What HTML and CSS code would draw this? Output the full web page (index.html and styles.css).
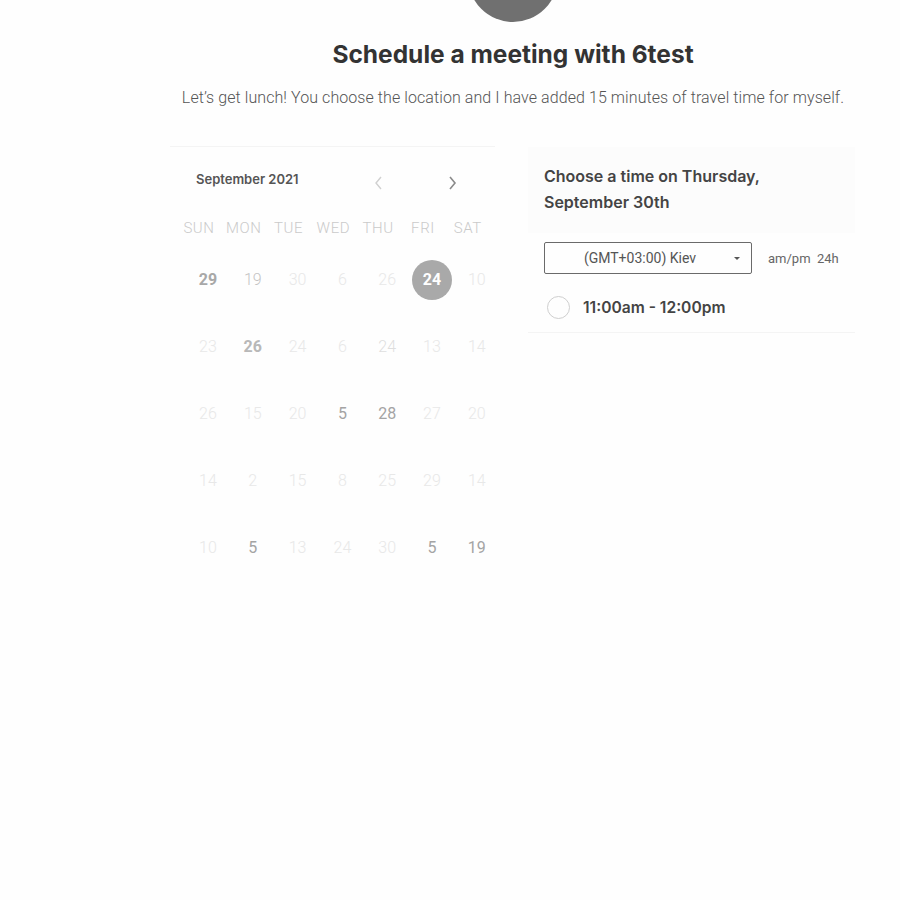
FILE: index.html
```html
<!DOCTYPE html>
<html>
<head>
<meta charset="utf-8">
<link rel="stylesheet" href="styles.css">
</head>
<body>
<div class="page">
  <div class="avatar"></div>
  <h1 class="title">Schedule a meeting with 6test</h1>
  <p class="subtitle">Let’s get lunch! You choose the location and I have added 15 minutes of travel time for myself.</p>
  <div class="columns">
    <section class="calendar">
      <div class="cal-head">
        <span class="month">September 2021</span>
        <span class="nav">
          <svg class="arrow prev" width="10" height="14" viewBox="0 0 10 14"><path d="M7 1 L2 7 L7 13" fill="none" stroke="currentColor" stroke-width="1.4"/></svg>
          <svg class="arrow next" width="10" height="14" viewBox="0 0 10 14"><path d="M3 1 L8 7 L3 13" fill="none" stroke="currentColor" stroke-width="1.6"/></svg>
        </span>
      </div>
      <div class="weekdays">
        <span>SUN</span><span>MON</span><span>TUE</span><span>WED</span><span>THU</span><span>FRI</span><span>SAT</span>
      </div>
      <div class="days">
        <span class="d bold">29</span><span class="d mid">19</span><span class="d faint">30</span><span class="d faint">6</span><span class="d faint">26</span><span class="d sel"><b>24</b></span><span class="d faint">10</span>
        <span class="d faint">23</span><span class="d bold light">26</span><span class="d faint">24</span><span class="d faint">6</span><span class="d faint2">24</span><span class="d faint">13</span><span class="d faint">14</span>
        <span class="d faint">26</span><span class="d faint">15</span><span class="d faint">20</span><span class="d avail">5</span><span class="d avail">28</span><span class="d faint">27</span><span class="d faint">20</span>
        <span class="d faint">14</span><span class="d faint">2</span><span class="d faint">15</span><span class="d faint">8</span><span class="d faint">25</span><span class="d faint">29</span><span class="d faint">14</span>
        <span class="d faint">10</span><span class="d avail">5</span><span class="d faint">13</span><span class="d faint">24</span><span class="d faint">30</span><span class="d avail">5</span><span class="d avail">19</span>
      </div>
    </section>
    <section class="times">
      <div class="times-head">Choose a time on Thursday, September 30th</div>
      <div class="controls">
        <div class="select">
          <span class="select-text">(GMT+03:00) Kiev</span>
          <span class="caret"></span>
        </div>
        <span class="format">am/pm&nbsp;&nbsp;24h</span>
      </div>
      <div class="slot">
        <span class="radio"></span>
        <span class="slot-text">11:00am - 12:00pm</span>
      </div>
    </section>
  </div>
</div>
</body>
</html>
```
FILE: styles.css
```css
html, body {
  margin: 0;
  padding: 0;
  background: #fefefe;
}
body {
  font-family: Roboto, "Liberation Sans", sans-serif;
  width: 900px;
  height: 900px;
  overflow: hidden;
}
.page {
  margin-left: 170px;
  width: 686px;
  display: flex;
  flex-direction: column;
  align-items: center;
}
.avatar {
  width: 90px;
  height: 90px;
  border-radius: 50%;
  background: #707070;
  margin-top: -68px;
}
.title {
  margin: 17px 0 0;
  font-family: Inter, sans-serif;
  font-weight: 700;
  font-size: 24.5px;
  line-height: 30px;
  color: #333;
  letter-spacing: 0;
}
.subtitle {
  margin: 19px 0 0;
  font-family: Roboto, sans-serif;
  font-weight: 300;
  font-size: 16px;
  line-height: 20px;
  color: #555;
  letter-spacing: 0.08px;
  white-space: nowrap;
}
.columns {
  margin-top: 38px;
  width: 686px;
  display: flex;
  gap: 33px;
  align-items: flex-start;
}
.calendar {
  width: 325px;
  border-top: 1px solid #f4f4f4;
}
.cal-head {
  display: flex;
  align-items: center;
  height: 32px;
  margin-top: 16px;
  padding-left: 26px;
}
.month {
  font-family: Inter, sans-serif;
  font-weight: 600;
  font-size: 13px;
  color: #555;
  width: 178px;
}
.nav {
  display: flex;
  gap: 63px;
  margin-top: 8px;
}
.arrow.prev { color: #d0d0d0; }
.arrow.next { color: #8a8a8a; }
.weekdays {
  display: grid;
  grid-template-columns: repeat(7, 44.8px);
  margin-left: 6.6px;
  margin-top: 21px;
  height: 24px;
  align-items: center;
  justify-items: center;
  font-weight: 300;
  font-size: 15px;
  color: #cacaca;
  letter-spacing: 0.6px;
}
.days {
  display: grid;
  grid-template-columns: repeat(7, 44.8px);
  grid-auto-rows: 67px;
  margin-left: 15.6px;
  margin-top: 6px;
  align-items: center;
  justify-items: center;
}
.d {
  width: 40px;
  height: 40px;
  display: flex;
  align-items: center;
  justify-content: center;
  font-size: 16px;
  font-weight: 300;
}
.faint { color: #e8e8e8; }
.faint2 { color: #dedede; }
.mid { color: #c4c4c4; }
.avail { color: #a4a4a4; font-weight: 400; }
.bold { font-weight: 700; color: #a8a8a8; }
.bold.light { color: #b8b8b8; }
.sel {
  border-radius: 50%;
  background: #a9a9a9;
  color: #fff;
}
.sel b { font-weight: 700; }
.times {
  width: 327px;
  border-bottom: 1px solid #f4f4f4;
}
.times-head {
  background: #fcfcfc;
  padding: 16px 60px 18px 16px;
  font-family: Inter, sans-serif;
  font-weight: 600;
  font-size: 16px;
  line-height: 26px;
  color: #444;
  margin-top: 1px;
}
.controls {
  display: flex;
  align-items: center;
  margin-top: 9px;
  padding-left: 16px;
}
.select {
  width: 206px;
  height: 30px;
  border: 1px solid #6a6a6a;
  border-radius: 2px;
  display: flex;
  align-items: center;
  position: relative;
}
.select-text {
  flex: 1;
  text-align: center;
  font-size: 14px;
  color: #555;
  padding-right: 16px;
}
.caret {
  position: absolute;
  right: 11px;
  top: 14px;
  width: 0;
  height: 0;
  border-left: 3px solid transparent;
  border-right: 3px solid transparent;
  border-top: 3px solid #555;
}
.format {
  margin-left: 16px;
  font-size: 13px;
  color: #666;
}
.slot {
  display: flex;
  align-items: center;
  height: 50px;
  padding-left: 19px;
  margin-top: 8px;
}
.radio {
  width: 21px;
  height: 21px;
  border: 1.5px solid #cfcfcf;
  border-radius: 50%;
}
.slot-text {
  margin-left: 13px;
  font-family: Inter, sans-serif;
  font-weight: 600;
  font-size: 15.6px;
  color: #444;
}
```
